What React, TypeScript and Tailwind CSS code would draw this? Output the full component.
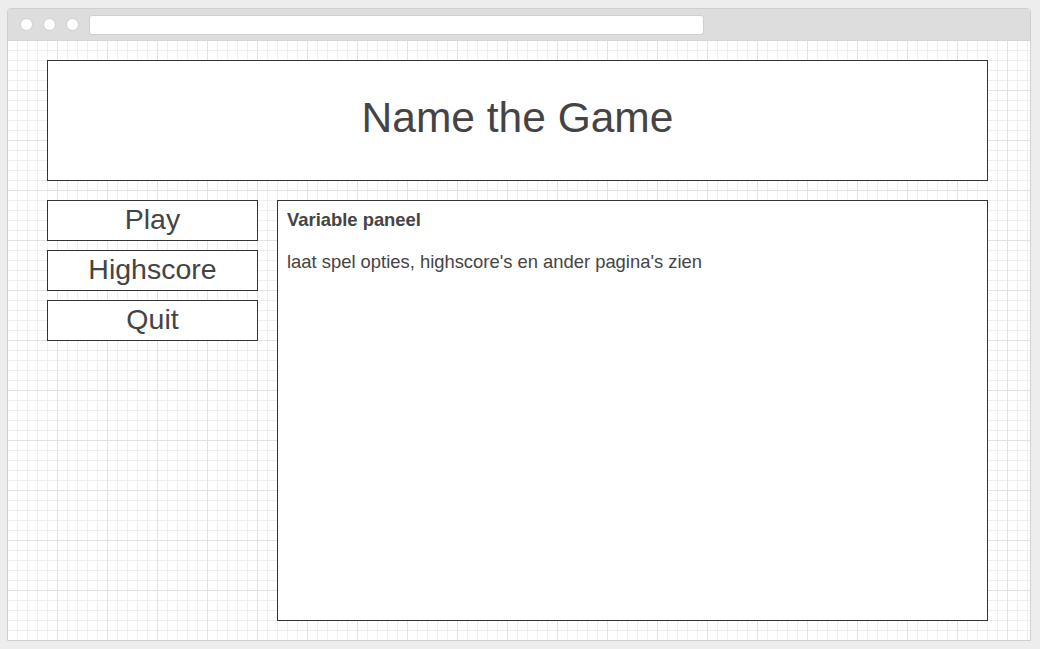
export default function App() {
  const buttons = ["Play", "Highscore", "Quit"];

  return (
    <div className="h-[649px] w-[1040px] bg-[#ededed] pt-[8px] pl-[7px] font-['Liberation_Sans',Arial,sans-serif]">
      <div className="flex h-[633px] w-[1024px] flex-col rounded-t-[4px] border border-[#cfcfcf] bg-white">
        {/* browser chrome */}
        <div className="flex h-[32px] shrink-0 items-center rounded-t-[3px] border-b border-[#d6d6d6] bg-[#dddddd] pl-[12px]">
          <div className="flex gap-[10px]">
            <span className="h-[13px] w-[13px] rounded-full border border-[#cfcfcf] bg-white" />
            <span className="h-[13px] w-[13px] rounded-full border border-[#cfcfcf] bg-white" />
            <span className="h-[13px] w-[13px] rounded-full border border-[#cfcfcf] bg-white" />
          </div>
          <div className="ml-[10px] h-[20px] w-[615px] rounded-[3px] border border-[#cfcfcf] bg-white" />
        </div>

        {/* canvas */}
        <div className="flex-1 bg-white bg-[linear-gradient(to_right,transparent_49px,#e2e2e2_49px),linear-gradient(to_bottom,transparent_49px,#e2e2e2_49px),linear-gradient(to_right,transparent_9px,#efefef_9px),linear-gradient(to_bottom,transparent_9px,#efefef_9px)] bg-[size:50px_50px,50px_50px,10px_10px,10px_10px] pl-[39px] pt-[19px]">
          <div className="flex h-[121px] w-[941px] items-center justify-center border border-[#333333] bg-white">
            <h1 className="-mt-[5px] text-[42.5px] leading-none text-[#444444]">Name the Game</h1>
          </div>

          <div className="mt-[19px] flex gap-[19px]">
            <div className="flex w-[211px] flex-col gap-[9px]">
              {buttons.map((b) => (
                <div
                  key={b}
                  className="flex h-[41px] items-center justify-center border border-[#333333] bg-white pb-[3px] text-[28.5px] leading-none text-[#444444]"
                >
                  {b}
                </div>
              ))}
            </div>

            <div className="h-[421px] w-[711px] border border-[#333333] bg-white px-[9px] pt-[7px] text-[#444444]">
              <p className="text-[18.4px] font-bold leading-[24px]">Variable paneel</p>
              <p className="mt-[18px] text-[18.4px] leading-[24px]">
                laat spel opties, highscore's en ander pagina's zien
              </p>
            </div>
          </div>
        </div>
      </div>
    </div>
  );
}
